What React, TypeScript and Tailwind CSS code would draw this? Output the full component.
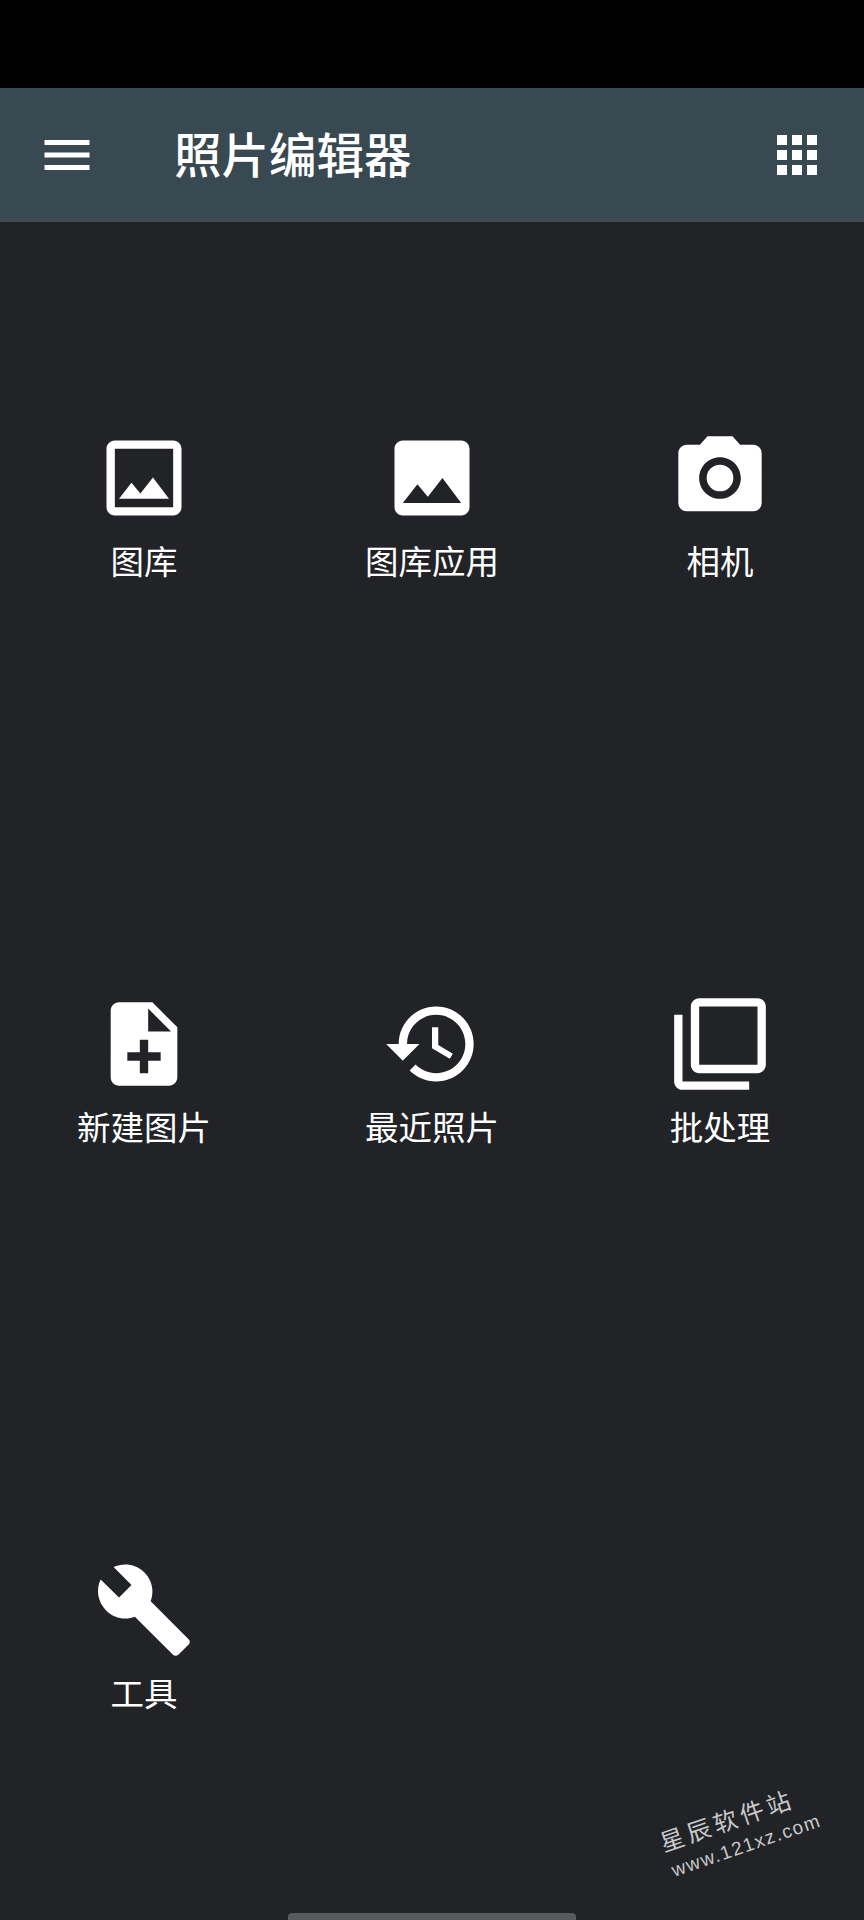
const cjk = "font-['Noto_Sans_CJK_SC',sans-serif]";

const icons = {
  gallery:
    "M19 5v14H5V5h14m0-2H5c-1.1 0-2 .9-2 2v14c0 1.1.9 2 2 2h14c1.1 0 2-.9 2-2V5c0-1.1-.9-2-2-2zm-4.86 8.86l-3 3.87L9 13.14 6 17h12l-3.86-5.14z",
  galleryApp:
    "M21 19V5c0-1.1-.9-2-2-2H5c-1.1 0-2 .9-2 2v14c0 1.1.9 2 2 2h14c1.1 0 2-.9 2-2zM8.5 13.5l2.5 3.01L14.5 12l4.5 6H5l3.5-4.5z",
  camera:
    "M12 8.8a3.2 3.2 0 1 1 0 6.4a3.2 3.2 0 1 1 0-6.4z M9 2L7.17 4H4c-1.1 0-2 .9-2 2v12c0 1.1.9 2 2 2h16c1.1 0 2-.9 2-2V6c0-1.1-.9-2-2-2h-3.17L15 2H9zm3 15c-2.76 0-5-2.24-5-5s2.24-5 5-5 5 2.24 5 5-2.24 5-5 5z",
  newFile:
    "M14 2H6c-1.1 0-1.99.9-1.99 2L4 20c0 1.1.89 2 1.99 2H18c1.1 0 2-.9 2-2V8l-6-6zm2 14h-3v3h-2v-3H8v-2h3v-3h2v3h3v2zm-3-7V3.5L18.5 9H13z",
  history:
    "M13 3c-4.97 0-9 4.03-9 9H1l3.89 3.89.07.14L9 12H6c0-3.87 3.13-7 7-7s7 3.13 7 7-3.13 7-7 7c-1.93 0-3.68-.79-4.94-2.06l-1.42 1.42C8.27 19.99 10.51 21 13 21c4.97 0 9-4.03 9-9s-4.03-9-9-9zm-1 5v5l4.28 2.54.72-1.21-3.5-2.08V8H12z",
  batch:
    "M3 5H1v16c0 1.1.9 2 2 2h16v-2H3V5zm18-4H7c-1.1 0-2 .9-2 2v14c0 1.1.9 2 2 2h14c1.1 0 2-.9 2-2V3c0-1.1-.9-2-2-2zm0 16H7V3h14v14z",
  tools:
    "M22.7 19l-9.1-9.1c.9-2.3.4-5-1.5-6.9-2-2-5-2.4-7.4-1.3L9 6 6 9 1.6 4.7C.4 7.1.9 10.1 2.9 12.1c1.9 1.9 4.6 2.4 6.9 1.5l9.1 9.1c.4.4 1 .4 1.4 0l2.3-2.3c.5-.4.5-1.1.1-1.4z",
  menu: "M3 18h18v-2H3v2zm0-5h18v-2H3v2zm0-7v2h18V6H3z",
  apps: "M4 8h4V4H4v4zm6 12h4v-4h-4v4zm-6 0h4v-4H4v4zm0-6h4v-4H4v4zm6 0h4v-4h-4v4zm6-10v4h4V4h-4zm-6 4h4V4h-4v4zm6 6h4v-4h-4v4zm0 6h4v-4h-4v4z",
};

const items = [
  { label: "图库", icon: icons.gallery },
  { label: "图库应用", icon: icons.galleryApp },
  { label: "相机", icon: icons.camera },
  { label: "新建图片", icon: icons.newFile },
  { label: "最近照片", icon: icons.history },
  { label: "批处理", icon: icons.batch },
  { label: "工具", icon: icons.tools },
];

function Icon({ d, className }: { d: string; className: string }) {
  return (
    <svg viewBox="0 0 24 24" fill="white" fillRule="evenodd" className={className}>
      <path d={d} />
    </svg>
  );
}

export default function App() {
  return (
    <div className={`relative h-[1920px] w-[864px] overflow-hidden bg-[#212327] ${cjk}`}>
      <div className="h-[88px] bg-black" />

      <header className="flex h-[134px] items-center justify-between bg-[#394951] px-[37px] shadow-[inset_0_-4px_0_#3e4b52]">
        <div className="flex items-center">
          <Icon d={icons.menu} className="h-[60px] w-[60px]" />
          <h1 className="mb-[4px] ml-[77px] text-[47.5px] leading-none font-medium text-white">照片编辑器</h1>
        </div>
        <Icon d={icons.apps} className="h-[60px] w-[60px]" />
      </header>

      <main className="grid h-[1698px] grid-cols-3 grid-rows-3">
        {items.map((item) => (
          <div key={item.label} className="flex flex-col items-center justify-center pb-[2px]">
            <Icon d={item.icon} className="h-[100px] w-[100px]" />
            <span className="mt-[12px] text-[33.5px] leading-[40px] font-normal text-white">{item.label}</span>
          </div>
        ))}
      </main>

      {/* watermark */}
      <div className="absolute top-[1803px] left-[652px] flex w-[170px] -rotate-[19deg] flex-col items-center gap-[6px] text-[#c9c9c9]">
        <span className="-ml-[12px] text-[24px] leading-[28px] tracking-[4px] whitespace-nowrap">星辰软件站</span>
        <span className="ml-[8px] font-['Liberation_Sans',sans-serif] text-[19px] leading-[22px] tracking-[1.5px] whitespace-nowrap">
          www.121xz.com
        </span>
      </div>

      {/* home indicator */}
      <div className="absolute bottom-0 left-[288px] h-[7px] w-[288px] rounded-t-[4px] bg-[#58595b]" />
    </div>
  );
}
